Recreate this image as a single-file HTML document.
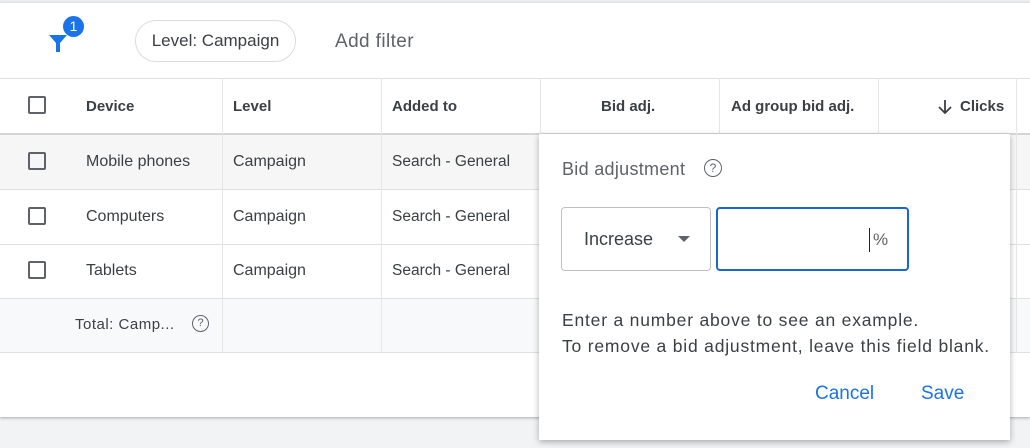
<!DOCTYPE html><html><head><style>
body{margin:0;width:1030px;height:448px;overflow:hidden;background:#f1f3f4;font-family:"Liberation Sans",Arial,sans-serif;position:relative}
.card{position:absolute;left:0;top:3px;width:1030px;height:414px;background:#fff;box-shadow:0 1px 3px rgba(0,0,0,.3)}
.topline{position:absolute;left:0;top:0;width:1030px;height:3px;background:#eceef0}
.a{position:absolute;white-space:nowrap}
.hl{position:absolute;left:0;width:1030px;height:1px;background:#e0e0e0}
.vl{position:absolute;width:1px;background:#e6e6e6;top:78px;height:274px}
.cb{position:absolute;left:28px;width:18px;height:18px;border:2px solid #5f6368;border-radius:2px;box-sizing:border-box}
.h{font-size:15px;font-weight:bold;color:#3c4043}
.t{font-size:16px;color:#3c4043}
</style></head><body>
<div class="topline"></div>
<div class="card">
<svg class="a" style="left:47px;top:24px" width="24" height="28" viewBox="0 0 24 28"><path d="M2 8h18l-7 8v9h-4v-9z" fill="#1a73e8"/></svg>
<div class="a" style="left:63px;top:13px;width:21px;height:21px;border-radius:50%;background:#1a73e8;color:#fff;font-size:14px;text-align:center;line-height:21px">1</div>
<div class="a" style="left:135px;top:17px;width:161px;height:42px;border:1px solid #dadce0;border-radius:21px;box-sizing:border-box;font-size:17px;color:#3c4043;text-align:center;line-height:40px">Level: Campaign</div>
<div class="a" style="left:335px;top:28px;font-size:19px;letter-spacing:0.4px;color:#5f6368">Add filter</div>
</div>
<div class="a" style="left:0;top:134px;width:1030px;height:55px;background:#f6f6f6"></div>
<div class="a" style="left:0;top:298px;width:1030px;height:54px;background:#f8f9fa"></div>
<div class="hl" style="top:78px"></div>
<div class="hl" style="top:133px;height:2px;background:#d5d5d5"></div>
<div class="hl" style="top:189px"></div><div class="hl" style="top:244px"></div><div class="hl" style="top:298px"></div><div class="hl" style="top:352px"></div>
<div class="vl" style="left:222px"></div><div class="vl" style="left:381px"></div><div class="vl" style="left:540px"></div><div class="vl" style="left:719px;height:56px"></div><div class="vl" style="left:878px;height:56px"></div><div class="vl" style="left:1016px"></div>
<div class="cb" style="top:96px"></div><div class="cb" style="top:152px"></div><div class="cb" style="top:207px"></div><div class="cb" style="top:261px"></div>
<div class="a h" style="left:86px;top:98px">Device</div><div class="a h" style="left:233px;top:98px">Level</div><div class="a h" style="left:392px;top:98px">Added to</div>
<div class="a h" style="left:601px;top:98px">Bid adj.</div><div class="a h" style="left:731px;top:98px">Ad group bid adj.</div>
<svg class="a" style="left:937px;top:98px" width="16" height="18" viewBox="0 0 16 18"><path d="M8 2v13M2 9l6 6 6-6" stroke="#3c4043" stroke-width="1.8" fill="none"/></svg>
<div class="a h" style="left:960px;top:98px">Clicks</div>
<div class="a t" style="left:86px;top:153px">Mobile phones</div><div class="a t" style="left:233px;top:153px">Campaign</div><div class="a t" style="left:392px;top:153px;font-size:15.5px">Search - General</div>
<div class="a t" style="left:86px;top:208px">Computers</div><div class="a t" style="left:233px;top:208px">Campaign</div><div class="a t" style="left:392px;top:208px;font-size:15.5px">Search - General</div>
<div class="a t" style="left:86px;top:262px">Tablets</div><div class="a t" style="left:233px;top:262px">Campaign</div><div class="a t" style="left:392px;top:262px;font-size:15.5px">Search - General</div>
<div class="a t" style="left:75px;top:316px;font-size:15px;letter-spacing:0.5px">Total: Camp...</div>
<div class="a" style="left:192px;top:315px;width:15px;height:15px;border:1.5px solid #5f6368;border-radius:50%;font-size:11px;color:#5f6368;text-align:center;line-height:15px">?</div>
<div class="a" style="left:539px;top:134px;width:471px;height:306px;background:#fff;box-shadow:0 2px 6px rgba(0,0,0,.3)">
<div class="a" style="left:23px;top:25px;font-size:18px;letter-spacing:0.3px;color:#5f6368">Bid adjustment</div>
<div class="a" style="left:165px;top:25px;width:16px;height:16px;border:1.5px solid #5f6368;border-radius:50%;font-size:12px;color:#5f6368;text-align:center;line-height:16px">?</div>
<div class="a" style="left:22px;top:73px;width:150px;height:64px;border:1px solid #bdc1c6;border-radius:4px;box-sizing:border-box"></div>
<div class="a" style="left:45px;top:95px;font-size:18px;color:#3c4043">Increase</div>
<div class="a" style="left:139px;top:102px;width:0;height:0;border-left:6px solid transparent;border-right:6px solid transparent;border-top:6px solid #5f6368"></div>
<div class="a" style="left:177px;top:73px;width:193px;height:64px;border:2px solid #1967d2;border-radius:4px;box-sizing:border-box"></div>
<div class="a" style="left:330px;top:94px;width:1px;height:24px;background:#222"></div>
<div class="a" style="left:334px;top:96px;font-size:17px;color:#5f6368">%</div>
<div class="a" style="left:23px;top:173px;font-size:17.5px;letter-spacing:0.8px;color:#3c4043;line-height:26px">Enter a number above to see an example.<br>To remove a bid adjustment, leave this field blank.</div>
<div class="a" style="left:276px;top:249px;font-size:19px;color:#1a73e8">Cancel</div>
<div class="a" style="left:382px;top:249px;font-size:19px;color:#1a73e8">Save</div>
</div>
</body></html>
